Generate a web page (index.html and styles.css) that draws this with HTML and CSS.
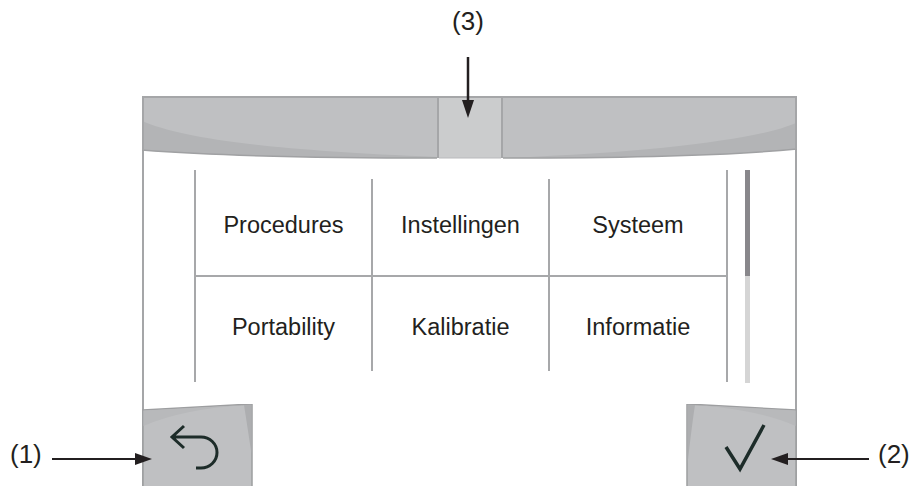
FILE: index.html
```html
<!DOCTYPE html>
<html lang="nl">
<head>
    <meta charset="UTF-8">
    <meta name="viewport" content="width=device-width, initial-scale=1.0">
    <title>Menu</title>
    <link rel="stylesheet" href="styles.css">
</head>
<body>
    <div class="stage">
        <div class="screen">
            <svg class="topbar" width="655" height="64" viewBox="0 0 655 64">
                <!-- linker deel -->
                <path d="M0 2 H295 V62 Q100 62 0 54 Z" fill="#bfc0c2"/>
                <path d="M0 25 C40 42 120 54 295 61 L295 62 Q100 62 0 54 Z" fill="#b3b4b6"/>
                <path d="M0 54 Q100 62 295 62" fill="none" stroke="#a0a1a3" stroke-width="1.5"/>
                <!-- rechter deel -->
                <path d="M361 2 H655 V53 Q560 62 361 62 Z" fill="#bfc0c2"/>
                <path d="M654 27 C620 42 520 56 361 62 Q560 62 654 53 Z" fill="#b3b4b6"/>
                <path d="M361 62 Q560 62 655 53" fill="none" stroke="#a0a1a3" stroke-width="1.5"/>
                <!-- tab -->
                <rect x="295" y="2" width="66" height="60" fill="#cbcccd"/>
                <path d="M296 0 V62 M360 0 V62" stroke="#a5a6a8" stroke-width="2"/>
                <path d="M297 62 H359" stroke="#b9babc" stroke-width="1"/>
                <!-- rand -->
                <path d="M0 1 H655" stroke="#a5a6a8" stroke-width="2"/>
                <path d="M1 0 V54 M654 0 V53" stroke="#a5a6a8" stroke-width="2"/>
            </svg>

            <div class="content">
                <div class="menu">
                    <div class="item top">Procedures</div>
                    <div class="item top sep">Instellingen</div>
                    <div class="item top sep">Systeem</div>
                    <div class="item bottom">Portability</div>
                    <div class="item bottom sep">Kalibratie</div>
                    <div class="item bottom sep">Informatie</div>
                </div>
                <div class="scroll">
                    <div class="thumb"></div>
                    <div class="track"></div>
                </div>
            </div>

            <div class="actions">
                <svg class="button" width="111" height="83" viewBox="0 0 111 83">
                    <path d="M1 6 L110 0 V83 H1 Z" fill="#bfc0c2" stroke="#9d9ea0" stroke-width="1.5"/>
                    <path d="M1.5 6.5 L104 1 Q40 5 1.5 22 Z" fill="#b8b9bb"/>
                    <path d="M102 1 L109.5 0.5 V50 Q105 20 102 1 Z" fill="#adaeb0"/>
                    <path d="M42 22 L30 33 L42 44 M30 33 H59 A16 15.5 0 0 1 59 64 H54" fill="none" stroke="#1d2c29" stroke-width="3"/>
                </svg>
                <svg class="button" width="111" height="83" viewBox="0 0 111 83">
                    <g transform="translate(111 0) scale(-1 1)">
                        <path d="M1 6 L110 0 V83 H1 Z" fill="#bfc0c2" stroke="#9d9ea0" stroke-width="1.5"/>
                        <path d="M1.5 6.5 L104 1 Q40 5 1.5 22 Z" fill="#b8b9bb"/>
                        <path d="M102 1 L109.5 0.5 V60 Q105 20 102 1 Z" fill="#adaeb0"/>
                    </g>
                    <path d="M40 43 L54 65 L78 21" fill="none" stroke="#1d2c29" stroke-width="3.5"/>
                </svg>
            </div>
        </div>

        <div class="callout callout-top">
            <span class="label">(3)</span>
            <svg width="14" height="61" viewBox="0 0 14 61">
                <path d="M7 0 V45" stroke="#231f20" stroke-width="2.5"/>
                <path d="M1 43 L7 61 L13 43 Z" fill="#231f20"/>
            </svg>
        </div>

        <div class="callout callout-left">
            <span class="label">(1)</span>
            <svg width="100" height="14" viewBox="0 0 100 14">
                <path d="M0 7 H85" stroke="#231f20" stroke-width="2"/>
                <path d="M83 1 L100 7 L83 13 Z" fill="#231f20"/>
            </svg>
        </div>

        <div class="callout callout-right">
            <svg width="98" height="14" viewBox="0 0 98 14">
                <path d="M15 7 H98" stroke="#231f20" stroke-width="2"/>
                <path d="M17 1 L0 7 L17 13 Z" fill="#231f20"/>
            </svg>
            <span class="label">(2)</span>
        </div>
    </div>
</body>
</html>
```

FILE: styles.css
```css
body {
    margin: 0;
    font-family: "Liberation Sans", Arial, sans-serif;
    background-color: #fff;
    color: #231f20;
}
.stage {
    position: relative;
    width: 913px;
    height: 486px;
    padding-top: 96px;
    box-sizing: border-box;
    overflow: hidden;
}
.screen {
    margin-left: 142px;
    width: 655px;
    height: 390px;
    box-sizing: border-box;
    border-left: 2px solid #a5a6a8;
    border-right: 2px solid #a5a6a8;
    display: flex;
    flex-direction: column;
}
.topbar {
    display: block;
    margin: 0 -2px;
    flex: none;
}
.content {
    display: flex;
    align-items: flex-start;
    gap: 17px;
    padding: 10px 0 0 50px;
}
.menu {
    display: grid;
    grid-template-columns: 175px 177px 178px;
    grid-template-rows: 107px 105px;
    border-left: 2px solid #a7a8aa;
    border-right: 2px solid #a7a8aa;
}
.item {
    display: flex;
    align-items: center;
    justify-content: center;
    font-size: 23.5px;
    box-sizing: border-box;
}
.item.top {
    margin-top: 9px;
    border-bottom: 2px solid #a7a8aa;
    padding-bottom: 3px;
}
.item.bottom {
    margin-bottom: 11px;
    padding-top: 7px;
}
.item.sep {
    border-left: 2px solid #a7a8aa;
}
.scroll {
    width: 5px;
    height: 213px;
    display: flex;
    flex-direction: column;
}
.thumb {
    height: 106px;
    background-color: #88878b;
}
.track {
    flex: 1;
    background-color: #d5d5d5;
}
.actions {
    display: flex;
    justify-content: space-between;
    margin: 21px -2px 0;
}
.button {
    display: block;
}
.callout {
    position: absolute;
    display: flex;
    align-items: flex-start;
}
.label {
    font-size: 26px;
    line-height: 30px;
}
.callout svg {
    display: block;
}
.callout-top {
    left: 440px;
    top: 6px;
    width: 56px;
    flex-direction: column;
    align-items: center;
    gap: 21px;
}
.callout-left,
.callout-right {
    top: 439px;
}
.callout-left svg,
.callout-right svg {
    margin-top: 13px;
}
.callout-left {
    left: 10px;
    gap: 10px;
}
.callout-right {
    left: 771px;
    gap: 9px;
}
```
